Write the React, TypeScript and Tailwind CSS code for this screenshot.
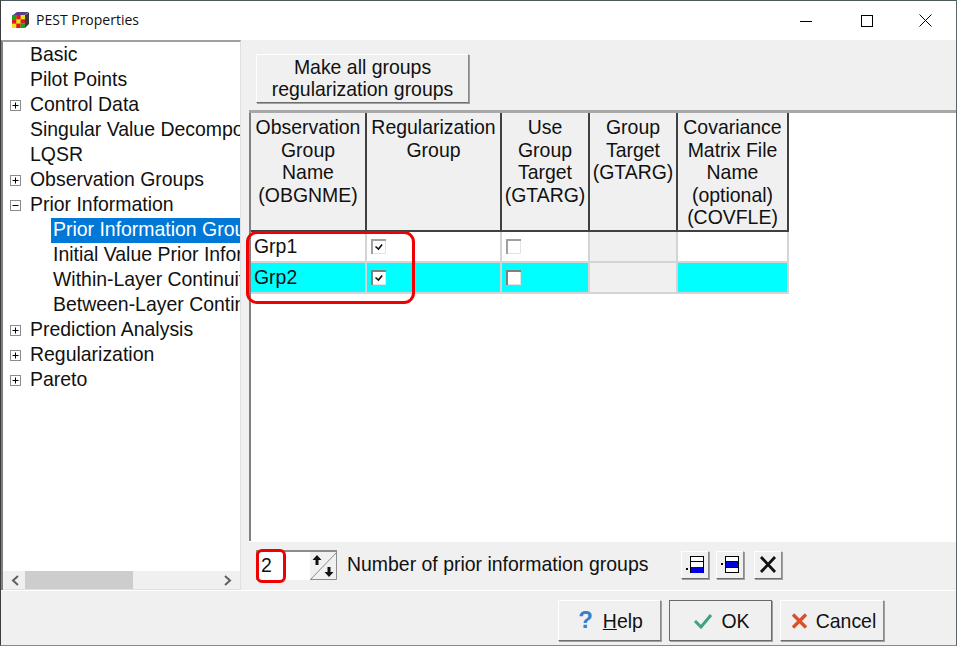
import type { ReactNode } from "react";

const TREE = [
  { label: "Basic", level: 0 },
  { label: "Pilot Points", level: 0 },
  { label: "Control Data", level: 0, box: "+" },
  { label: "Singular Value Decomposition", level: 0 },
  { label: "LQSR", level: 0 },
  { label: "Observation Groups", level: 0, box: "+" },
  { label: "Prior Information", level: 0, box: "-" },
  { label: "Prior Information Groups", level: 1, selected: true },
  { label: "Initial Value Prior Information", level: 1 },
  { label: "Within-Layer Continuity", level: 1 },
  { label: "Between-Layer Continuity", level: 1 },
  { label: "Prediction Analysis", level: 0, box: "+" },
  { label: "Regularization", level: 0, box: "+" },
  { label: "Pareto", level: 0, box: "+" },
];

const HEADERS = [
  ["Observation", "Group", "Name", "(OBGNME)"],
  ["Regularization", "Group"],
  ["Use", "Group", "Target", "(GTARG)"],
  ["Group", "Target", "(GTARG)"],
  ["Covariance", "Matrix File", "Name", "(optional)", "(COVFLE)"],
];

const raised =
  "bg-[#f0f0f0] border border-t-white border-l-white border-r-[#8a8a8a] border-b-[#6e6e6e] shadow-[1px_1px_0_#a0a0a0]";

function AppIcon() {
  return (
    <svg width="20" height="19" viewBox="0 0 20 19" className="shrink-0">
      <path d="M14 4l4-2.5V13l-4 4z" fill="#3a3a3a" />
      <path d="M2 4l4-3h12l-4 3z" fill="#5a3d8a" />
      <rect x="1" y="4" width="13" height="13" fill="#e8e020" />
      <rect x="1" y="4" width="4.3" height="4.3" fill="#1aa02a" />
      <rect x="5.3" y="4" width="4.3" height="4.3" fill="#e01818" />
      <rect x="1" y="8.3" width="4.3" height="4.3" fill="#e01818" />
      <rect x="9.6" y="8.3" width="4.4" height="4.3" fill="#e01818" />
      <rect x="5.3" y="12.6" width="4.3" height="4.4" fill="#e01818" />
      <rect x="9.6" y="12.6" width="4.4" height="4.4" fill="#1aa02a" />
    </svg>
  );
}

function ExpandBox({ kind }: { kind: string }) {
  return (
    <svg width="11" height="11" viewBox="0 0 11 11" className="shrink-0">
      <rect x="0.5" y="0.5" width="10" height="10" fill="#fff" stroke="#8c8c8c" />
      <path d="M2.5 5.5h6" stroke="#000" />
      {kind === "+" && <path d="M5.5 2.5v6" stroke="#000" />}
    </svg>
  );
}

function Check({ on, dark }: { on: boolean; dark?: boolean }) {
  const edge = dark ? "#808080" : "#a0a0a0";
  return (
    <svg width="15" height="15" viewBox="0 0 15 15">
      <rect x="0" y="0" width="15" height="15" fill="#e3e3e3" />
      <rect x="2" y="2" width="12" height="12" fill="#fff" />
      <path d="M1 15V1h14" fill="none" stroke={edge} strokeWidth="2" />
      {on && <path d="M4.5 7.5l3 2.6 3.6-4.6" fill="none" stroke="#111" strokeWidth="1.6" />}
    </svg>
  );
}

function SmallButton({ children }: { children: ReactNode }) {
  return <div className={`w-[28px] h-[28px] flex items-center justify-center ${raised}`}>{children}</div>;
}

function RowIcon({ blue }: { blue: number }) {
  return (
    <svg width="22" height="20" viewBox="0 0 22 20">
      <rect x="2" y={blue === 2 ? 13 : 8} width="2" height="2" fill="#000" />
      <rect x="6.5" y="1.5" width="13" height="16" fill="#fff" stroke="#000" />
      <path d="M6.5 6.5h13M6.5 12.5h13" stroke="#000" />
      <rect x="7" y={blue === 2 ? 12 : 7} width="12" height={blue === 2 ? 6 : 5} fill="#0000e0" />
    </svg>
  );
}

function FooterButton({
  children,
  isDefault,
  width,
  pad,
}: {
  children: ReactNode;
  isDefault?: boolean;
  width: string;
  pad: string;
}) {
  return (
    <div
      className={`h-[41px] pt-[1px] flex items-center justify-center ${pad} ${width} ${raised} ${
        isDefault ? "outline outline-1 outline-[#6a6a6a] -outline-offset-1" : ""
      }`}
    >
      {children}
    </div>
  );
}

export default function App() {
  return (
    <div
      className="relative w-[957px] h-[646px] overflow-hidden bg-[#f0f0f0] flex flex-col border-t border-t-[#4a5a5a] border-l border-l-[#3c3c3c] border-r border-r-[#55686a] border-b border-b-[#8a8a8a] text-[19.45px] leading-[22.5px] text-[#111]"
      style={{ fontFamily: '"Liberation Sans", Arial, sans-serif' }}
    >
      {/* Title bar */}
      <div className="h-[39px] shrink-0 bg-white flex items-center pl-[10px]">
        <AppIcon />
        <span className="ml-[5px] text-[14px] text-[#111]" style={{ fontFamily: '"Open Sans", sans-serif' }}>
          PEST Properties
        </span>
        <div className="ml-auto flex items-center">
          <svg width="12" height="14" viewBox="0 0 12 14" className="mr-[49px]">
            <path d="M0 7.5h12" stroke="#000" />
          </svg>
          <svg width="12" height="12" viewBox="0 0 12 12" className="mr-[23px]">
            <rect x="0.5" y="0.5" width="11" height="11" fill="none" stroke="#000" />
          </svg>
          <svg width="13" height="13" viewBox="0 0 13 13" className="ml-[23px] mr-[24px]">
            <path d="M0.5 0.5l12 12M12.5 0.5l-12 12" stroke="#000" />
          </svg>
        </div>
      </div>

      <div className="flex-1 min-h-0 flex">
        {/* Tree */}
        <div className="w-[240px] shrink-0 h-[550px] flex flex-col border-t-2 border-l-2 border-r border-t-[#a0a0a0] border-l-[#808080] border-r-[#e0e0e0] bg-[#f0f0f0]">
          <div className="flex-1 min-h-0 bg-white pt-[1px] overflow-hidden">
            {TREE.map((item) => (
              <div key={item.label} className="h-[25px] flex items-center relative whitespace-nowrap overflow-hidden">
                {item.box && (
                  <span className="absolute left-[7px] top-[7px] flex">
                    <ExpandBox kind={item.box} />
                  </span>
                )}
                {item.level === 0 ? (
                  <span className="ml-[27px] -mt-[2px]">{item.label}</span>
                ) : (
                  <span
                    className={`ml-[48px] pl-[2px] flex-1 h-[25px] leading-[23px] ${
                      item.selected ? "bg-[#0078d7] text-white outline-1 outline-dotted outline-[#8a5a20] -outline-offset-1" : ""
                    }`}
                  >
                    {item.label}
                  </span>
                )}
              </div>
            ))}
          </div>
          <div className="h-[19px] shrink-0 flex items-center bg-[#f0f0f0] border-b border-b-[#e0e0e0]">
            <svg width="22" height="19" viewBox="0 0 22 19" className="shrink-0">
              <path d="M15 5l-5 4.5 5 4.5" fill="none" stroke="#606060" strokeWidth="2" />
            </svg>
            <div className="w-[108px] h-full bg-[#cdcdcd]" />
            <div className="flex-1" />
            <svg width="22" height="19" viewBox="0 0 22 19" className="shrink-0">
              <path d="M7 5l5 4.5-5 4.5" fill="none" stroke="#606060" strokeWidth="2" />
            </svg>
          </div>
        </div>

        {/* Splitter */}
        <div className="w-[8px] shrink-0" />

        {/* Right panel */}
        <div className="flex-1 min-w-0 h-[550px] flex flex-col">
          <div className="h-[73px] shrink-0 pl-[7px] pt-[14px] border-b-[3px] border-b-[#a8a8a8]">
            <div className={`w-[213px] h-[49px] pb-[1px] flex flex-col items-center justify-center ${raised}`}>
              <span>Make all groups</span>
              <span>regularization groups</span>
            </div>
          </div>

          <div className="flex-1 min-h-0 bg-white border-l-2 border-l-[#808080]">
            <div className="grid grid-cols-[116px_135px_88px_88px_111px] w-max">
              {HEADERS.map((lines) => (
                <div
                  key={lines[0]}
                  className="h-[119px] bg-[#f0f0f0] border-r-2 border-b-2 border-r-[#404040] border-b-[#404040] pt-[3px] flex flex-col items-center text-center"
                >
                  {lines.map((l) => (
                    <span key={l} className="whitespace-nowrap">
                      {l}
                    </span>
                  ))}
                </div>
              ))}
              {["Grp1", "Grp2"].map((name, i) => {
                const cell = `h-[31px] border-r-2 border-b-2 border-r-[#d4d4d4] border-b-[#d4d4d4] ${i === 1 ? "bg-[#00ffff]" : "bg-white"}`;
                return [
                  <div key={name + "a"} className={`${cell} pl-[3px] pt-[3px]`}>
                    {name}
                  </div>,
                  <div key={name + "b"} className={`${cell} pl-[4px] flex items-center`}>
                    <Check on dark={i === 1} />
                  </div>,
                  <div key={name + "c"} className={`${cell} pl-[4px] flex items-center`}>
                    <Check on={false} dark={i === 1} />
                  </div>,
                  <div key={name + "d"} className="h-[31px] bg-[#f0f0f0] border-r-2 border-b-2 border-r-[#d4d4d4] border-b-[#d4d4d4]" />,
                  <div key={name + "e"} className={cell} />,
                ];
              })}
            </div>
          </div>

          <div className="h-[49px] shrink-0 flex items-center border-t border-t-white -ml-[1px] pl-[8px] pb-[3px]">
            <div className="w-[81px] h-[30px] flex items-stretch bg-white border-t-2 border-l-2 border-t-[#8c8c8c] border-l-[#8c8c8c]">
              <span className="flex-1 pl-[3px] leading-[27px]">2</span>
              <svg width="27" height="28" viewBox="0 0 27 28" className="shrink-0">
                <rect width="27" height="28" fill="#f0f0f0" />
                <path d="M0 28L27 0" stroke="#8c8c8c" />
                <path d="M26.5 0v27.5H0" fill="none" stroke="#8c8c8c" />
                <path d="M7 3l-4.5 5H5.5v5h3V8h3zM19 25l4.5-5H20.5v-5h-3v5h-3z" fill="#111" />
              </svg>
            </div>
            <span className="ml-[10px] whitespace-nowrap">Number of prior information groups</span>
            <div className="ml-[33px] flex gap-[7px]">
              <SmallButton>
                <RowIcon blue={2} />
              </SmallButton>
              <SmallButton>
                <RowIcon blue={1} />
              </SmallButton>
              <div className="ml-[3px]">
                <SmallButton>
                  <svg width="20" height="20" viewBox="0 0 20 20">
                    <path d="M3 2l14 15M17 2L3 17" stroke="#111" strokeWidth="2.8" />
                  </svg>
                </SmallButton>
              </div>
            </div>
          </div>
        </div>
      </div>

      {/* Footer */}
      <div className="h-[55px] shrink-0 border-t border-t-white flex items-start pt-[9px] pl-[557px] gap-[8px]">
        <FooterButton width="w-[103px]" pad="gap-[10px] pl-[2px]">
          <span className="font-bold text-[#3b7fc4] text-[24px] -mt-[2px]">?</span>
          <span>
            <span className="underline">H</span>elp
          </span>
        </FooterButton>
        <FooterButton width="w-[103px]" pad="gap-[8px] pl-[2px]" isDefault>
          <svg width="20" height="16" viewBox="0 0 20 16">
            <path d="M2 8l6 6L18 2" fill="none" stroke="#3fa37a" strokeWidth="3" />
          </svg>
          <span>OK</span>
        </FooterButton>
        <FooterButton width="w-[104px]" pad="gap-[8px] pl-[3px]">
          <svg width="17" height="16" viewBox="0 0 17 16">
            <path d="M2 1.5l13 13M15 1.5l-13 13" stroke="#d9502f" strokeWidth="3.4" />
          </svg>
          <span>Cancel</span>
        </FooterButton>
      </div>

      {/* Red annotations */}
      <div className="absolute left-[245px] top-[230px] w-[169px] h-[73px] rounded-[11px] border-[3px] border-[#f00000]" />
      <div className="absolute left-[255px] top-[548px] w-[30px] h-[34px] rounded-[6px] border-[3px] border-[#f00000]" />
    </div>
  );
}
